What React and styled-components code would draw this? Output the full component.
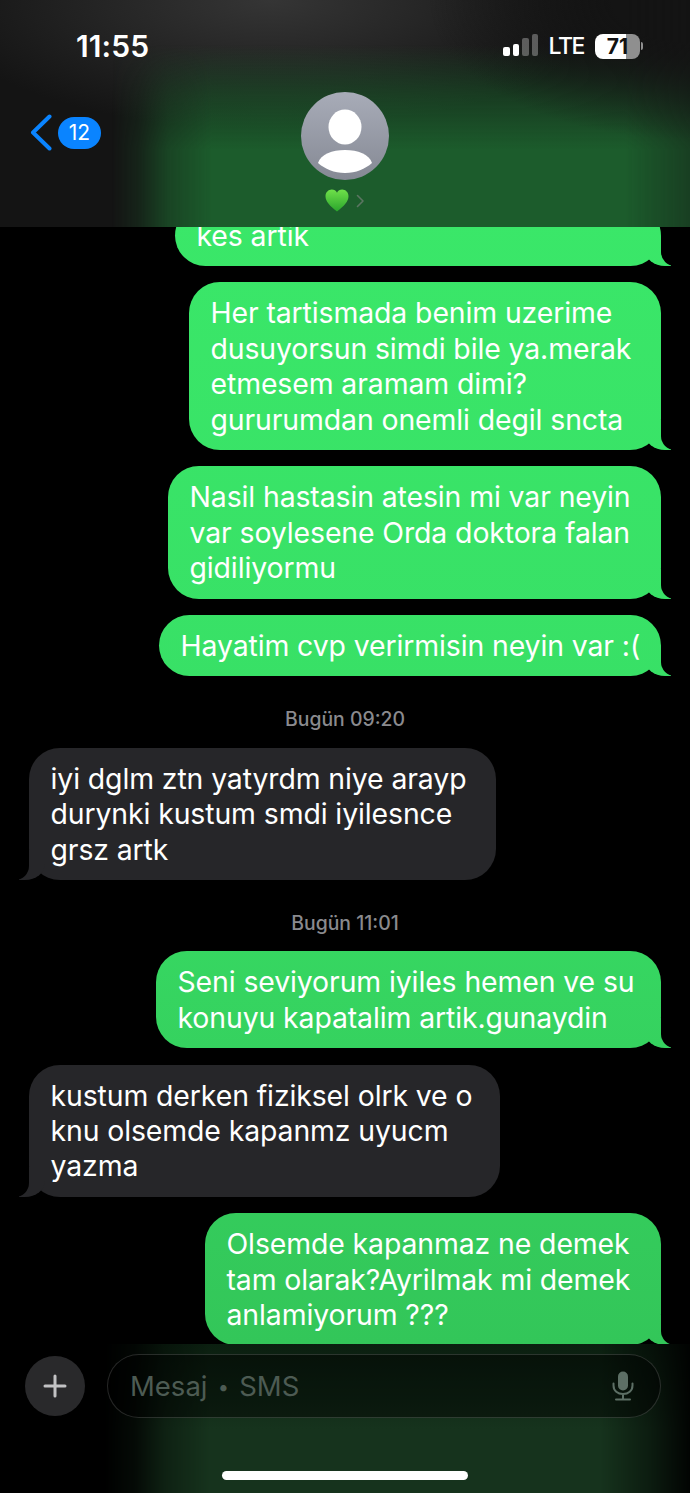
import React from 'react';
import styled, { createGlobalStyle } from 'styled-components';

const GlobalStyle = createGlobalStyle`
    html, body { margin: 0; padding: 0; background: #000; }
    body { font-family: Inter, "Noto Sans", "Liberation Sans", sans-serif; }
`;

const OUT_FILL = 'linear-gradient(180deg, #3bea6a 0, #38e066 700px, #33c659 1344px) fixed';
const IN_FILL = '#262629';
const HEADER_MASK = 'linear-gradient(90deg, transparent 112px, rgba(0, 0, 0, 0.22) 138px, rgba(0, 0, 0, 0.68) 168px, #000 212px, #000 625px, rgba(0, 0, 0, 0.6) 690px)';
const COMPOSER_MASK = 'linear-gradient(90deg, transparent 105px, rgba(0, 0, 0, 0.2) 135px, rgba(0, 0, 0, 0.65) 165px, #000 210px, #000 600px, rgba(0, 0, 0, 0.55) 650px, rgba(0, 0, 0, 0.08) 690px)';

const Screen = styled.div`
    width: 690px;
    height: 1493px;
    display: flex;
    flex-direction: column;
    overflow: hidden;
    background: #000;
    color: #fff;
`;

const Header = styled.header`
    position: relative;
    height: 227px;
    flex-shrink: 0;
    display: flex;
    flex-direction: column;
    background:
        radial-gradient(ellipse 340px 130px at 270px 0px, #353535 0%, rgba(53, 53, 53, 0) 100%),
        #141414;

    &::before {
        content: '';
        position: absolute;
        inset: 0;
        background:
            radial-gradient(ellipse 260px 140px at 690px 0px, #141414 30%, rgba(20, 20, 20, 0) 100%),
            linear-gradient(180deg, rgba(28, 92, 44, 0) 45px, rgba(28, 92, 44, 0.55) 95px, #1c5c2c 150px);
        -webkit-mask-image: ${HEADER_MASK};
        mask-image: ${HEADER_MASK};
    }

    & > * { position: relative; }
`;

const StatusBar = styled.div`
    height: 92px;
    display: flex;
    align-items: flex-start;
    justify-content: space-between;
    padding: 29px 47px 0 76px;
    box-sizing: border-box;
`;

const Clock = styled.div`
    font-size: 30px;
    line-height: 34px;
    font-weight: 600;
    letter-spacing: 0.1px;
`;

const StatusIcons = styled.div`
    display: flex;
    align-items: center;
    height: 34px;
`;

const SignalBars = styled.div`
    display: flex;
    align-items: flex-end;
    gap: 3px;
    height: 22px;
    margin-right: 10px;
    transform: translateY(-1px);
`;

const SignalBar = styled.span`
    width: 6.5px;
    height: ${p => p.$h}px;
    border-radius: 2px;
    background: ${p => (p.$on ? '#fff' : 'rgba(255,255,255,0.3)')};
`;

const Network = styled.span`
    font-size: 23px;
    line-height: 34px;
    font-weight: 500;
    letter-spacing: -1.4px;
    margin-right: 11px;
`;

const Battery = styled.div`
    width: 45px;
    height: 25px;
    border-radius: 8px;
    overflow: hidden;
    background: linear-gradient(90deg, #fff 69%, #8f8f8f 69%);
    color: #111;
    font-size: 21px;
    line-height: 25px;
    font-weight: 700;
    text-align: center;
`;

const BatteryNub = styled.span`
    width: 2px;
    height: 8px;
    margin-left: 1px;
    border-radius: 0 2px 2px 0;
    background: #8f8f8f;
`;

const Nav = styled.div`
    display: grid;
    grid-template-columns: 1fr auto 1fr;
    padding: 0 30px;
`;

const Back = styled.div`
    display: flex;
    align-items: center;
    gap: 6px;
    height: 37px;
    margin-top: 22px;
`;

const Badge = styled.span`
    width: 43px;
    height: 32px;
    border-radius: 16px;
    background: #0a84ff;
    font-size: 21px;
    line-height: 32px;
    text-align: center;
`;

const Contact = styled.div`
    display: flex;
    flex-direction: column;
    align-items: center;
`;

const Avatar = styled.svg`
    width: 88px;
    height: 88px;
    display: block;
`;

const ContactName = styled.div`
    display: flex;
    align-items: center;
    gap: 7px;
    margin-top: 9px;
`;

const Thread = styled.main`
    flex: 1;
    min-height: 0;
    display: flex;
    flex-direction: column;
    justify-content: flex-end;
    padding: 0 29px;
    overflow: hidden;
`;

const Bubble = styled.div`
    position: relative;
    flex-shrink: 0;
    box-sizing: border-box;
    align-self: ${p => (p.$out ? 'flex-end' : 'flex-start')};
    width: ${p => p.$width}px;
    margin-top: 16.4px;
    padding: 13px 0 13px 21.5px;
    border-radius: 31px;
    font-size: 28.4px;
    line-height: 35.4px;
    letter-spacing: -0.1px;
    white-space: nowrap;
    background: ${p => (p.$out ? OUT_FILL : IN_FILL)};

    &:last-child { margin-bottom: -1.4px; }

    &::before {
        content: '';
        position: absolute;
        bottom: 0;
        ${p => (p.$out ? 'right: -10px;' : 'left: -10px;')}
        width: 26px;
        height: 30px;
        background: ${p => (p.$out ? OUT_FILL : IN_FILL)};
        ${p => (p.$out ? 'border-bottom-left-radius: 20px 16px;' : 'border-bottom-right-radius: 20px 16px;')}
    }

    &::after {
        content: '';
        position: absolute;
        bottom: 0;
        ${p => (p.$out ? 'right: -26px;' : 'left: -26px;')}
        width: 26px;
        height: 31px;
        background: #000;
        ${p => (p.$out ? 'border-bottom-left-radius: 14px;' : 'border-bottom-right-radius: 14px;')}
    }
`;

const BubbleText = styled.div`
    position: relative;
    z-index: 1;
`;

const TimeLabel = styled.div`
    flex-shrink: 0;
    margin-top: 31px;
    height: 24px;
    text-align: center;
    font-size: 19.4px;
    line-height: 24px;
    font-weight: 500;
    color: #8a8a8e;
    & + ${Bubble} { margin-top: 16.4px; }
`;

const Composer = styled.footer`
    position: relative;
    height: 149px;
    flex-shrink: 0;
    display: flex;
    flex-direction: column;
    background: #000;

    &::before {
        content: '';
        position: absolute;
        inset: 0;
        background: linear-gradient(180deg, #0b1f10 0, #16331d 85px);
        -webkit-mask-image: ${COMPOSER_MASK};
        mask-image: ${COMPOSER_MASK};
    }

    & > * { position: relative; }
`;

const InputRow = styled.div`
    display: flex;
    align-items: center;
    gap: 22px;
    padding: 10px 29px 0 25px;
`;

const PlusButton = styled.div`
    width: 60px;
    height: 60px;
    flex-shrink: 0;
    display: flex;
    align-items: center;
    justify-content: center;
    border-radius: 50%;
    background: #29292b;
`;

const Field = styled.div`
    flex: 1;
    height: 64px;
    box-sizing: border-box;
    display: flex;
    align-items: center;
    justify-content: space-between;
    padding: 0 26px 0 22px;
    border: 1.5px solid rgba(255, 255, 255, 0.15);
    border-radius: 32px;
    background: rgba(0, 0, 0, 0.45);
`;

const Placeholder = styled.span`
    font-size: 27.5px;
    color: #4d5b53;
`;

const PlaceholderDot = styled.span`
    font-size: 20px;
    vertical-align: 2px;
    margin: 0 2.5px;
`;

const HomeBar = styled.div`
    align-self: center;
    width: 246px;
    height: 9px;
    margin-top: 53px;
    border-radius: 5px;
    background: #fff;
`;

const MESSAGES = [
    { out: true, width: 486, lines: ['kes artik'] },
    { out: true, width: 472, lines: ['Her tartismada benim uzerime', 'dusuyorsun simdi bile ya.merak', 'etmesem aramam dimi?', 'gururumdan onemli degil sncta'] },
    { out: true, width: 493, lines: ['Nasil hastasin atesin mi var neyin', 'var soylesene Orda doktora falan', 'gidiliyormu'] },
    { out: true, width: 502, lines: ['Hayatim cvp verirmisin neyin var :('] },
    { time: 'Bugün 09:20' },
    { width: 467, lines: ['iyi dglm ztn yatyrdm niye arayp', 'durynki kustum smdi iyilesnce', 'grsz artk'] },
    { time: 'Bugün 11:01' },
    { out: true, width: 505, lines: ['Seni seviyorum iyiles hemen ve su', 'konuyu kapatalim artik.gunaydin'] },
    { width: 471, lines: ['kustum derken fiziksel olrk ve o', 'knu olsemde kapanmz uyucm', 'yazma'] },
    { out: true, width: 456, lines: ['Olsemde kapanmaz ne demek', 'tam olarak?Ayrilmak mi demek', 'anlamiyorum ???'] },
];

const App = () => (
    <Screen>
        <GlobalStyle />
        <Header>
            <StatusBar>
                <Clock>11:55</Clock>
                <StatusIcons>
                    <SignalBars>
                        <SignalBar $on $h={9} />
                        <SignalBar $on $h={12} />
                        <SignalBar $h={18} />
                        <SignalBar $h={22} />
                    </SignalBars>
                    <Network>LTE</Network>
                    <Battery>71</Battery>
                    <BatteryNub />
                </StatusIcons>
            </StatusBar>
            <Nav>
                <Back>
                    <svg width="22" height="37" viewBox="0 0 22 37" fill="none">
                        <path d="M19.5 2.5 3 18.500l16.500 16" stroke="#0a84ff" strokeWidth="4" strokeLinecap="round" strokeLinejoin="round" />
                    </svg>
                    <Badge>12</Badge>
                </Back>
                <Contact>
                    <Avatar viewBox="0 0 88 88">
                        <defs>
                            <linearGradient id="avatarFill" x1="0" y1="0" x2="0" y2="1">
                                <stop offset="0%" stopColor="#a8acb8" />
                                <stop offset="100%" stopColor="#858994" />
                            </linearGradient>
                        </defs>
                        <circle cx="44" cy="44" r="44" fill="url(#avatarFill)" />
                        <ellipse cx="44" cy="35" rx="16.500" ry="17.500" fill="#fff" />
                        <path d="M17 71c3-9 14-13 27-13s24 4 27 13c-7 6-16 10-27 10s-20-4-27-10z" fill="#fff" />
                    </Avatar>
                    <ContactName>
                        <svg width="24" height="23" viewBox="0 0 24 23">
                            <defs>
                                <linearGradient id="heartFill" x1="0" y1="0" x2="0" y2="1">
                                    <stop offset="0%" stopColor="#6fe04a" />
                                    <stop offset="100%" stopColor="#2aa52c" />
                                </linearGradient>
                            </defs>
                            <path d="M12 22.500C5 17 .5 12.500 .5 7.200 .5 3.300 3.500 .5 6.800 .5c2.300 0 4.200 1.200 5.200 3.200 1-2 2.900-3.200 5.200-3.200 3.300 0 6.300 2.800 6.300 6.700 0 5.300-4.500 9.800-11.500 15.300z" fill="url(#heartFill)" />
                        </svg>
                        <svg width="9" height="14" viewBox="0 0 9 14" fill="none">
                            <path d="M1.500 1.500 7 7l-5.500 5.500" stroke="#5b7562" strokeWidth="1.600" strokeLinecap="round" strokeLinejoin="round" />
                        </svg>
                    </ContactName>
                </Contact>
            </Nav>
        </Header>
        <Thread>
            {MESSAGES.map((m, i) => (m.time ? (
                <TimeLabel key={i}>{m.time}</TimeLabel>
            ) : (
                <Bubble key={i} $out={m.out} $width={m.width}>
                    <BubbleText>
                        {m.lines.map((line, j) => <div key={j}>{line}</div>)}
                    </BubbleText>
                </Bubble>
            )))}
        </Thread>
        <Composer>
            <InputRow>
                <PlusButton>
                    <svg width="24" height="24" viewBox="0 0 24 24" fill="none">
                        <path d="M12 2v20M2 12h20" stroke="#c2c2c4" strokeWidth="3" strokeLinecap="round" />
                    </svg>
                </PlusButton>
                <Field>
                    <Placeholder>Mesaj <PlaceholderDot>•</PlaceholderDot> SMS</Placeholder>
                    <svg width="22" height="30" viewBox="0 0 22 30" fill="none">
                        <rect x="6" y="0.500" width="10" height="19" rx="5" fill="#5d6f65" />
                        <path d="M1.500 12.500v2c0 5.300 4.200 8.500 9.500 8.500s9.500-3.200 9.500-8.500v-2M11 23v5M4 28.500h14" stroke="#5d6f65" strokeWidth="2" strokeLinecap="round" />
                    </svg>
                </Field>
            </InputRow>
            <HomeBar />
        </Composer>
    </Screen>
);

export default App;
